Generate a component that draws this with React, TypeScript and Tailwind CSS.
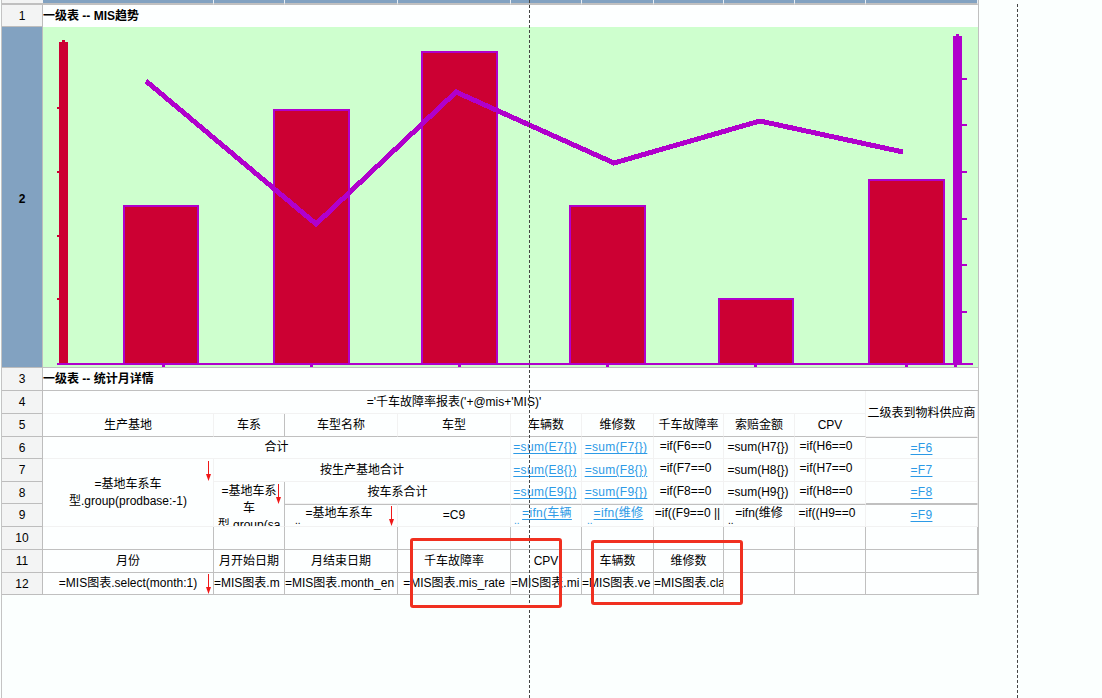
import React from "react";

const L = "border-r border-b border-[#f2f2f2]";
const G = "border-r border-b border-[#c0c0c0]";
const LB = "border-r border-b border-r-[#f2f2f2] border-b-[#c0c0c0]";
const T = "border-t border-t-[#c0c0c0]";

function Cell({ className = "", children }: { className?: string; children?: React.ReactNode }) {
  return (
    <div className={`relative overflow-hidden min-w-0 bg-[#fdffff] ${className}`}>{children}</div>
  );
}

function C({ b = L, className = "", children }: { b?: string; className?: string; children?: React.ReactNode }) {
  return (
    <Cell className={`${b} flex items-center justify-center text-center whitespace-nowrap ${className}`}>
      {children}
    </Cell>
  );
}

function Hdr({ n, blue = false }: { n: string; blue?: boolean }) {
  return (
    <div
      className={`flex items-center justify-center border-r border-b border-[#bdbdbd] pt-[1px] ${
        blue ? "bg-[#82a2c1] font-bold pt-[4px]" : "bg-[#f3f4f4]"
      }`}
    >
      {n}
    </div>
  );
}

function A({ children }: { children: React.ReactNode }) {
  return <span className="text-[#2c9ae6] underline underline-offset-2 tracking-[0.3px]">{children}</span>;
}

function Dots({ className = "" }: { className?: string }) {
  return <div className={`text-left text-[10px] leading-[4px] h-[4px] -mt-[3px] ${className}`}>..</div>;
}

function Arrow({ className }: { className: string }) {
  return (
    <svg width="5" height="21" viewBox="0 0 5 21" className={`absolute ${className}`}>
      <path d="M2 0V15" stroke="#f01818" strokeWidth="1" shapeRendering="crispEdges" fill="none" />
      <path d="M0 13H5L2.5 20Z" fill="#f01818" />
    </svg>
  );
}

function Chart() {
  const bars = [
    [123, 205, 76],
    [273, 109, 77],
    [421, 51, 77],
    [569, 205, 77],
    [718, 298, 76],
    [868, 179, 77],
  ];
  return (
    <svg width="935" height="340" viewBox="43 27 935 340" className="block" shapeRendering="crispEdges">
      <rect x="59" y="42" width="9" height="322" fill="#cc0033" />
      <rect x="62" y="40" width="3" height="2" fill="#cc0033" />
      {[107, 171, 235, 298].map((y) => (
        <rect key={y} x="57" y={y} width="2" height="2" fill="#cc0033" />
      ))}
      {bars.map(([x, y, w]) => (
        <rect key={x} x={x + 1} y={y + 1} width={w - 2} height={363 - y} fill="#cc0033" stroke="#b000cc" strokeWidth="2" />
      ))}
      <rect x="953" y="36" width="9" height="328" fill="#b000cc" />
      <rect x="956" y="34" width="3" height="2" fill="#b000cc" />
      {[78, 124, 171, 218, 264, 311].map((y) => (
        <rect key={y} x="962" y={y} width="5" height="2" fill="#b000cc" />
      ))}
      <rect x="57" y="363" width="916" height="2" fill="#b000cc" />
      {[162, 310, 458, 606, 754, 905, 954].map((x) => (
        <rect key={x} x={x} y="365" width="3" height="2" fill="#b000cc" />
      ))}
      <polyline
        points="146,81 316,224 456,92 614,163 760,121 903,152"
        fill="none"
        stroke="#b000cc"
        strokeWidth="5"
      />
    </svg>
  );
}

export default function App() {
  return (
    <div
      className="relative w-[1102px] h-[698px] overflow-hidden bg-[#fbfffe] text-black text-[12px] leading-[17px] pl-[2px]"
      style={{ fontFamily: '"Liberation Sans", "Noto Sans CJK SC", sans-serif' }}
    >
      <div className="absolute left-[1px] top-0 bottom-0 w-px bg-[#c4c4c4]" />
      <div className="grid w-[977px] grid-cols-[41px_171px_71px_113px_113px_71px_72px_70px_71px_71px_112px] grid-rows-[5px_22px_341px_23px_23px_23px_22px_23px_22px_23px_23px_23px_22px] border-r border-[#c0c0c0]">
        {/* column header band */}
        <div className="border-b-2 border-[#c0c0c0] bg-[#f3f4f4]" />
        {Array.from({ length: 10 }).map((_, i) => (
          <div key={i} className="border-r border-b-2 border-r-[#e8eef4] border-b-[#c0c0c0] bg-[#82a2c1]" />
        ))}

        <Hdr n="1" />
        <Cell className="col-span-10 flex items-center font-bold pt-[1px]">一级表 -- MIS趋势</Cell>

        <Hdr n="2" blue />
        <div className="col-span-10 bg-[#ceffce] overflow-hidden border-b border-[#c0c0c0]">
          <Chart />
        </div>

        <Hdr n="3" />
        <Cell className="col-span-10 flex items-center font-bold border-b border-[#c0c0c0] pt-[1px]">
          一级表 -- 统计月详情
        </Cell>

        <Hdr n="4" />
        <C className="col-span-9">='千车故障率报表('+@mis+'MIS)'</C>
        <C className="row-span-2">二级表到物料供应商</C>

        <Hdr n="5" />
        <C b={LB}>生产基地</C>
        <C b={G}>车系</C>
        <C b={LB}>车型名称</C>
        <C b={LB}>车型</C>
        <C b={LB}>车辆数</C>
        <C b={LB}>维修数</C>
        <C b={LB}>千车故障率</C>
        <C b={LB}>索赔金额</C>
        <C b={LB}>CPV</C>

        <Hdr n="6" />
        <C className="col-span-4">合计</C>
        <C className="pr-[2px]"><A>=sum(E7{"{}"})</A></C>
        <C className="pr-[3px]"><A>=sum(F7{"{}"})</A></C>
        <C className="items-start pt-[1px] pr-[6px]">=if(F6==0</C>
        <C className="pr-[2px]">=sum(H7{"{}"})</C>
        <C className="items-start pt-[1px] pr-[8px]">=if(H6==0</C>
        <C className={T}><A>=F6</A></C>

        <Hdr n="7" />
        <Cell className={`${L} row-span-3 flex flex-col items-center justify-center text-center`}>
          <span>=基地车系车</span>
          <span>型.group(prodbase:-1)</span>
          <Arrow className="right-[2px] top-[2px]" />
        </Cell>
        <C className="col-span-3">按生产基地合计</C>
        <C className="pr-[2px]"><A>=sum(E8{"{}"})</A></C>
        <C className="pr-[3px]"><A>=sum(F8{"{}"})</A></C>
        <C className="items-start pt-[1px] pr-[6px]">=if(F7==0</C>
        <C className="pr-[2px]">=sum(H8{"{}"})</C>
        <C className="items-start pt-[1px] pr-[8px]">=if(H7==0</C>
        <C><A>=F7</A></C>

        <Hdr n="8" />
        <Cell className="border-r border-b border-r-[#c0c0c0] border-b-[#f2f2f2] row-span-2 flex flex-col items-center text-center pt-[1px]">
          <span>=基地车系</span>
          <span>车</span>
          <span className="whitespace-nowrap">型.group(sa</span>
          <Arrow className="right-[3px] top-[2px]" />
        </Cell>
        <C className="col-span-2">按车系合计</C>
        <C className="pr-[2px]"><A>=sum(E9{"{}"})</A></C>
        <C className="pr-[3px]"><A>=sum(F9{"{}"})</A></C>
        <C className="items-start pt-[1px] pr-[6px]">=if(F8==0</C>
        <C className="pr-[2px]">=sum(H9{"{}"})</C>
        <C className="items-start pt-[1px] pr-[8px]">=if(H8==0</C>
        <C b={LB}><A>=F8</A></C>

        <Hdr n="9" />
        <Cell className={`${L} ${T} text-center`}>
          <div className="pr-[4px]">=基地车系车</div>
          <Dots className="pl-[10px]" />
          <Arrow className="right-[3px] top-[1px]" />
        </Cell>
        <C className={T}>=C9</C>
        <Cell className={`${L} ${T} text-center`}>
          <div className="pl-[2px]"><A>=ifn(车辆</A></div>
          <Dots className="pl-[3px] text-[#2c9ae6]" />
        </Cell>
        <Cell className={`${L} ${T} text-center`}>
          <div className="pl-[2px]"><A>=ifn(维修</A></div>
          <Dots className="pl-[5px] text-[#2c9ae6]" />
        </Cell>
        <Cell className={`${L} ${T} text-center whitespace-nowrap pr-[2px]`}>=if((F9==0 ||</Cell>
        <Cell className={`${L} ${T} text-center`}>
          <div>=ifn(维修</div>
          <Dots className="pl-[4px]" />
        </Cell>
        <Cell className={`${L} ${T} text-center whitespace-nowrap pr-[6px]`}>=if((H9==0</Cell>
        <C className={T}><A>=F9</A></C>

        <Hdr n="10" />
        {Array.from({ length: 10 }).map((_, i) => (
          <C key={i} b={G} />
        ))}

        <Hdr n="11" />
        <C b={G}>月份</C>
        <C b={G}>月开始日期</C>
        <C b={G}>月结束日期</C>
        <C b={G}>千车故障率</C>
        <C b={G}>CPV</C>
        <C b={G}>车辆数</C>
        <C b={G}>维修数</C>
        <C b={G} />
        <C b={G} />
        <C b={G} />

        <Hdr n="12" />
        <C b={G}>
          =MIS图表.select(month:1)
          <Arrow className="right-[2px] top-[1px]" />
        </C>
        <C b={G} className="justify-start">=MIS图表.m</C>
        <C b={G} className="justify-start">=MIS图表.month_en</C>
        <C b={G}>=MIS图表.mis_rate</C>
        <C b={G} className="justify-start">=MIS图表.mi</C>
        <C b={G} className="justify-start">=MIS图表.ve</C>
        <C b={G} className="justify-start">=MIS图表.cla</C>
        <C b={G} />
        <C b={G} />
        <C b={G} />
      </div>

      {/* page-break guides */}
      <div className="absolute left-[529px] top-0 bottom-0 border-l border-dashed border-[#444]" />
      <div className="absolute left-[1017px] top-[4px] bottom-0 border-l border-dashed border-[#444]" />

      {/* hand-drawn annotation boxes */}
      <div className="absolute left-[410px] top-[538px] w-[152px] h-[70px] border-[3px] border-[#f03020] rounded-[3px]" />
      <div className="absolute left-[591px] top-[540px] w-[152px] h-[65px] border-[3px] border-[#f03020] rounded-[3px]" />
    </div>
  );
}
